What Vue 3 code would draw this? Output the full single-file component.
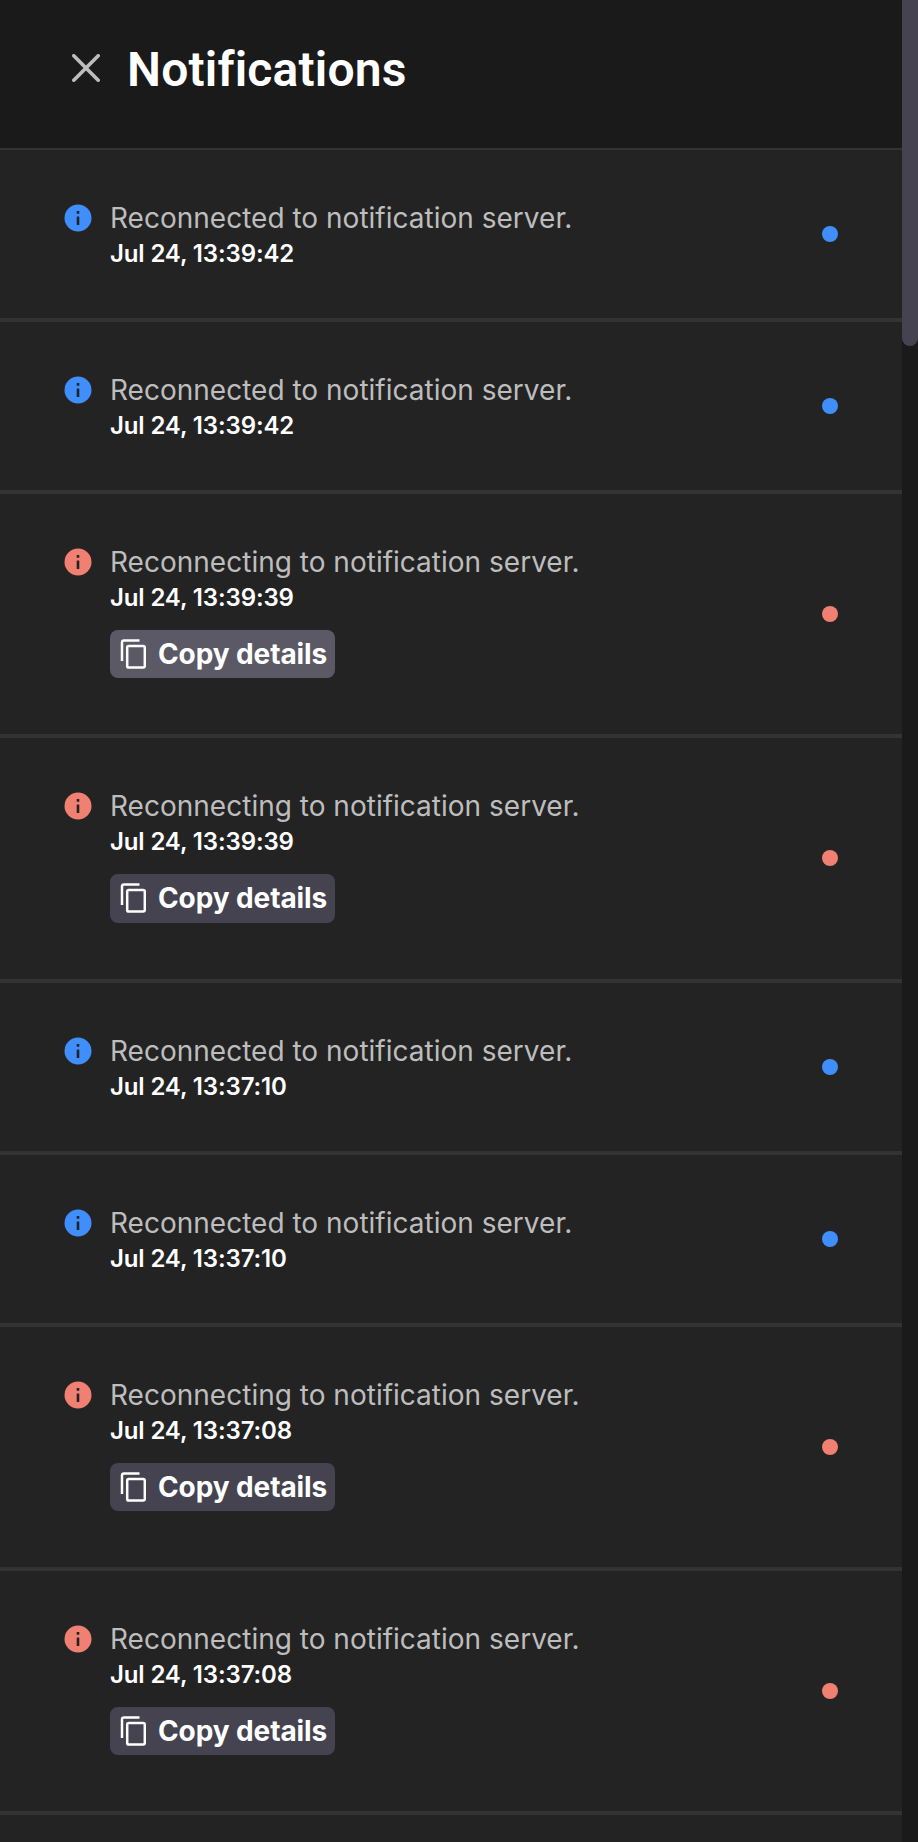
<script setup>
const notifications = [
  { type: 'info', time: 'Jul 24, 13:39:42' },
  { type: 'info', time: 'Jul 24, 13:39:42' },
  { type: 'error', time: 'Jul 24, 13:39:39', hovered: true },
  { type: 'error', time: 'Jul 24, 13:39:39' },
  { type: 'info', time: 'Jul 24, 13:37:10' },
  { type: 'info', time: 'Jul 24, 13:37:10' },
  { type: 'error', time: 'Jul 24, 13:37:08' },
  { type: 'error', time: 'Jul 24, 13:37:08' },
]
const messages = {
  info: 'Reconnected to notification server.',
  error: 'Reconnecting to notification server.',
}
</script>

<template>
  <div class="window">
    <main class="panel">
      <header class="header">
        <button class="close" aria-label="Close">
          <svg width="28" height="28" viewBox="0 0 28 28">
            <path d="M1.8 1.8 26.2 26.2M26.2 1.8 1.8 26.2" fill="none" stroke="#bdbdbd" stroke-width="3.6" stroke-linecap="round" />
          </svg>
        </button>
        <h1 class="title">Notifications</h1>
      </header>
      <ul class="list">
        <li v-for="(n, i) in notifications" :key="i" class="item" :class="n.type">
          <svg class="status" width="28" height="28" viewBox="0 0 28 28">
            <circle cx="14" cy="14" r="13.5" fill="currentColor" />
            <rect x="12.7" y="7.1" width="2.6" height="2.7" rx=".5" fill="#232323" />
            <rect x="12.7" y="12.4" width="2.6" height="8.5" rx=".5" fill="#232323" />
          </svg>
          <div class="body">
            <p class="message">{{ messages[n.type] }}</p>
            <p class="time">{{ n.time }}</p>
            <button v-if="n.type === 'error'" class="copy" :class="{ hovered: n.hovered }">
              <svg width="26" height="30" viewBox="0 0 26 30" fill="none" stroke="#fff" stroke-width="2.5">
                <path d="M2 22V3.2a1.8 1.8 0 0 1 1.8-1.8H19.5" />
                <rect x="7.2" y="6.9" width="17.6" height="21.7" rx="1.6" />
              </svg>
              <span class="label">Copy details</span>
            </button>
          </div>
          <span class="dot"></span>
        </li>
      </ul>
    </main>
    <aside class="track"><div class="thumb"></div></aside>
  </div>
</template>

<style>
html, body { background: #232323; overflow: hidden; }
</style>

<style scoped>
.window {
  display: flex;
  height: 1842px;
  overflow: hidden;
  background: #232323;
  font-family: Inter, "Liberation Sans", sans-serif;
}
.panel { width: 902px; }
.header {
  box-sizing: border-box;
  height: 150px;
  display: flex;
  align-items: flex-start;
  padding: 0 0 0 72px;
  background: #1a1a1a;
  border-bottom: 2px solid #333;
}
button { border: 0; padding: 0; background: none; font-family: inherit; }
.close { display: flex; margin-top: 54px; }
.title {
  margin: 38px 0 0 27px;
  font-family: Roboto, sans-serif;
  font-size: 48px;
  line-height: 64px;
  font-weight: 600;
  letter-spacing: 0.18px;
  color: #fff;
  white-space: nowrap;
}
.list { margin: 0; padding: 0; list-style: none; }
.item {
  box-sizing: border-box;
  height: 172px;
  display: flex;
  align-items: center;
  padding: 0 64px;
  border-bottom: 4px solid #333;
}
.item.error { height: 244.3px; color: #ef8072; }
.item.info { color: #3f8efc; }
.status { align-self: flex-start; margin-top: 54px; flex: none; }
.body { align-self: flex-start; margin: 50px 0 0 18px; flex: 1; }
.message {
  margin: 0;
  font-size: 28px;
  line-height: 36px;
  letter-spacing: 0.01px;
  color: #bdbdbd;
  white-space: nowrap;
}
.time {
  margin: 0;
  font-size: 24px;
  line-height: 36px;
  font-weight: 600;
  letter-spacing: -0.13px;
  color: #fff;
}
.copy {
  display: flex;
  align-items: center;
  box-sizing: border-box;
  width: 225px;
  height: 48.3px;
  margin-top: 14px;
  padding-left: 10px;
  border-radius: 8px;
  background: #454350;
  color: #fff;
}
.copy.hovered { background: #5b5966; }
.label { margin-left: 12px; font-size: 28px; line-height: 36px; font-weight: 700; letter-spacing: -0.1px; white-space: nowrap; }
.dot { width: 16px; height: 16px; border-radius: 50%; background: currentColor; }
.track { width: 16px; background: #1a1a1a; }
.thumb { height: 346px; border-radius: 0 0 8px 8px; background: #454350; }
</style>
